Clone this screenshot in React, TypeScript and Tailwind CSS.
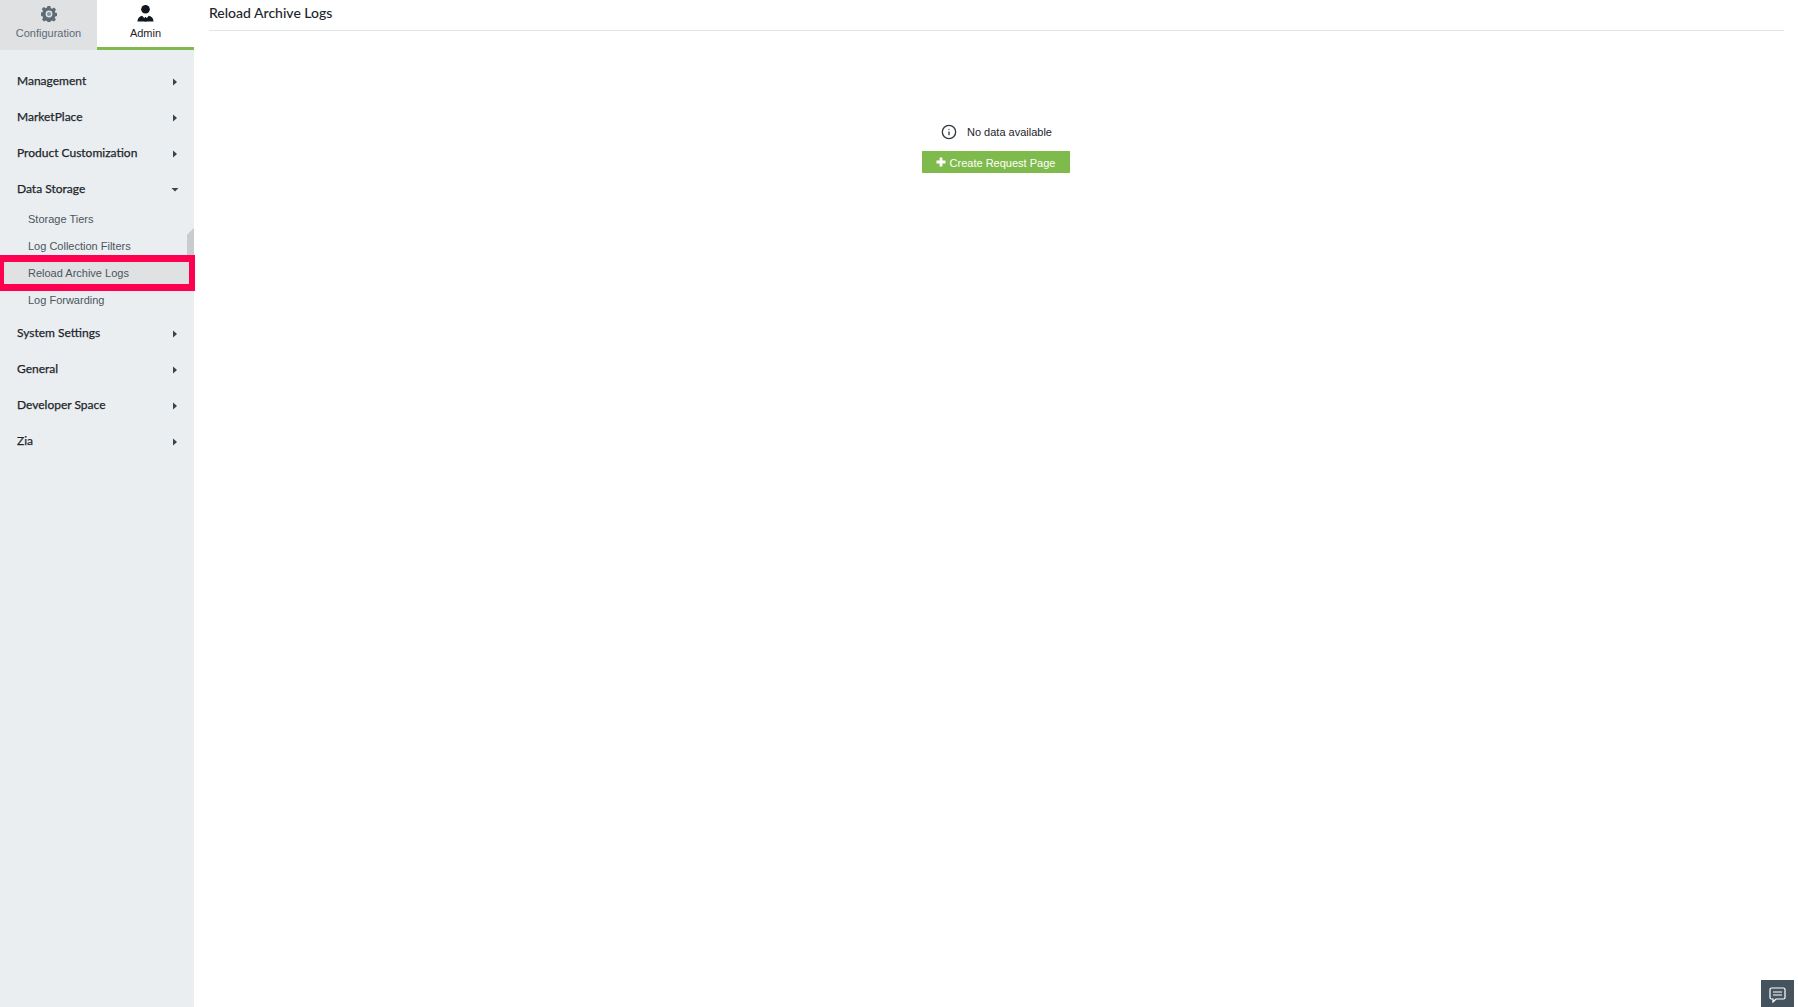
import React from "react";
import { Info } from "lucide-react";

const Caret = ({ open }: { open?: boolean }) => (
  <svg width="8" height="8" viewBox="0 0 8 8" className="text-[#39434c]">
    {open ? <path d="M0.5 2H7.5L4 5.5Z" fill="currentColor" /> : <path d="M2 0.5V7.5L6 4Z" fill="currentColor" />}
  </svg>
);

const Head = ({ label, open }: { label: string; open?: boolean }) => (
  <div className="h-9 flex items-center justify-between pl-[17px] pr-[15px] text-[#1d252c] text-[12px] font-normal [-webkit-text-stroke:0.25px_#1d252c] font-['Lato',sans-serif] leading-none">
    <span>{label}</span>
    <span className="flex mt-[2px]"><Caret open={open} /></span>
  </div>
);

const Sub = ({ label, selected }: { label: string; selected?: boolean }) => (
  <div className={`h-[27px] flex items-center pl-[28px] text-[11px] text-[#4a5560] font-['Liberation_Sans',sans-serif] ${selected ? "relative" : ""}`}>
    {label}
    {selected && (
      <div className="absolute z-10 left-0 top-[-5px] w-[195px] h-[36px] border-[7px] border-l-[4px] border-r-[6px] border-[#ff0050] bg-[#dfe1e3] flex items-center pl-[24px] text-[11px] text-[#4a5560]">
        {label}
      </div>
    )}
  </div>
);

export default function App() {
  return (
    <div className="h-[1007px] w-[1798px] flex bg-white overflow-hidden font-['Liberation_Sans',sans-serif]">
      <aside className="w-[194px] shrink-0 bg-[#eaeef0] flex flex-col">
        <div className="flex h-[50px]">
          <div className="w-[97px] bg-[#dfe1e3] flex flex-col items-center pt-[6px] text-[#5d6b77]">
            <svg width="16" height="16" viewBox="0 0 16 16" fill="#5d6b77">
              <path fillRule="evenodd" d="M6.6 0h2.8l.4 2.2 1.3.6 1.9-1.2 2 2-1.2 1.9.6 1.3 2.1.4v2.8l-2.2.4-.6 1.3 1.2 1.9-2 2-1.9-1.2-1.3.6-.3 2.2H6.6l-.4-2.2-1.3-.6-1.9 1.2-2-2 1.2-1.9-.6-1.3L-.7 9.4V6.6l2.1-.4.6-1.3-1.2-1.9 2-2 1.9 1.2 1.3-.6zM8 4.6a3.4 3.4 0 1 0 0 6.8 3.4 3.4 0 0 0 0-6.8z" />
              <circle cx="8" cy="8" r="2" fill="#8794a0" />
            </svg>
            <span className="text-[11px] leading-none mt-[6px]">Configuration</span>
          </div>
          <div className="w-[97px] bg-white border-b-[3px] border-[#7fba4c] flex flex-col items-center pt-[5px] text-[#1d252c]">
            <svg width="17" height="17" viewBox="0 0 17 17" fill="#111820">
              <circle cx="8.5" cy="4.3" r="4.3" />
              <path d="M0.5 16.5c0-3.3 1.7-5 4.6-5.8L7.4 13.2 8 12h1l.6 1.2 2.3-2.5c2.9.8 4.6 2.5 4.6 5.8z" />
              <path d="M8 13.5h1l.5 3h-2z" />
            </svg>
            <span className="text-[11px] leading-none mt-[6px]">Admin</span>
          </div>
        </div>
        <nav className="relative pt-[13px]">
          <Head label="Management" />
          <Head label="MarketPlace" />
          <Head label="Product Customization" />
          <Head label="Data Storage" open />
          <div className="-mt-[1px] pb-[1px]">
            <Sub label="Storage Tiers" />
            <Sub label="Log Collection Filters" />
            <Sub label="Reload Archive Logs" selected />
            <Sub label="Log Forwarding" />
          </div>
          <Head label="System Settings" />
          <Head label="General" />
          <Head label="Developer Space" />
          <Head label="Zia" />
          <div className="absolute left-[187px] top-[178px] w-[7px] h-[27px] bg-[#c9cccf] [clip-path:polygon(100%_0,100%_100%,0_100%,0_25%)]" />
        </nav>
      </aside>
      <main className="flex-1 relative pl-[15px] pr-[14px] flex flex-col">
        <div className="h-[31px] border-b border-[#e2e4e6] flex items-center pb-[5px] text-[14px] text-[#1d252c] font-medium font-['Lato',sans-serif]">
          Reload Archive Logs
        </div>
        <div className="flex flex-col items-center pt-[91px] pl-[2px]">
          <div className="flex items-center gap-[10px] h-[20px] text-[11px] text-[#1d252c] -ml-[2px]">
            <Info size={16} strokeWidth={2} className="text-[#2e3a44]" />
            <span>No data available</span>
          </div>
          <button className="mt-[9px] -ml-[4px] w-[148px] h-[22px] bg-[#7fba4c] text-white text-[11px] flex items-center justify-center pt-[2px]">
            <svg width="10" height="10" viewBox="0 0 10 10" fill="#fff" className="mr-[4px] -mt-[2px]"><path d="M3.6 0.5h2.8v3.1h3.1v2.8H6.4v3.1H3.6V6.4H0.5V3.6h3.1z" /></svg>
            Create Request Page
          </button>
        </div>
        <div className="absolute right-[4px] bottom-0 w-[33px] h-[27px] bg-[#44535e] flex items-center justify-center">
          <svg width="17" height="16" viewBox="0 0 17 16" fill="none" stroke="#fff" strokeWidth="1.2" className="mt-[3px]">
            <path d="M2.5 1h12a1.5 1.5 0 0 1 1.5 1.5v8a1.5 1.5 0 0 1-1.5 1.5H7l-3 3v-3H2.5A1.5 1.5 0 0 1 1 10.500v-8A1.500 1.500 0 0 1 2.500 1z" />
            <path d="M4 5h9M4 8h9" />
          </svg>
        </div>
      </main>
    </div>
  );
}
